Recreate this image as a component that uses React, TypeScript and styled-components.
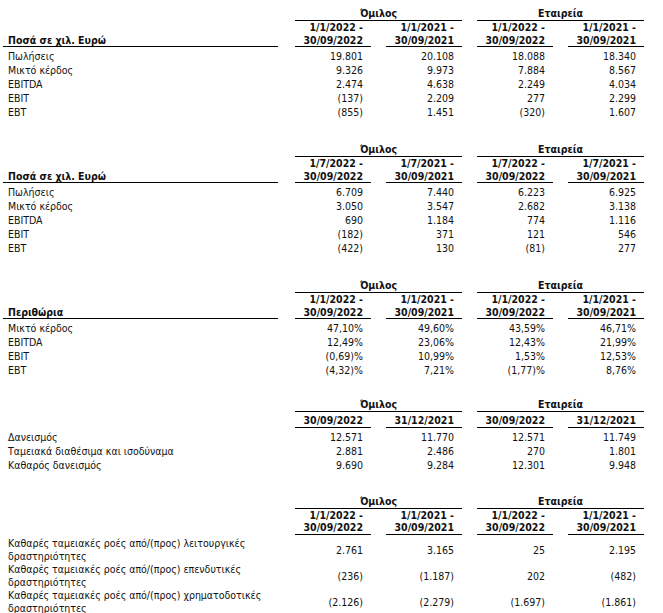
import React from 'react';
import styled, { createGlobalStyle } from 'styled-components';

const GlobalStyle = createGlobalStyle`
  html, body { margin: 0; padding: 0; background: #fff; }
  body {
    font-family: "DejaVu Sans Condensed", "DejaVu Sans", sans-serif;
    font-stretch: condensed;
    font-size: 10.5px;
    color: #111;
  }
`;

const Page = styled.div`
  padding: 7px 0 0 3px;
  display: flex;
  flex-direction: column;
`;

const Table = styled.div<{ $gap: number }>`
  display: grid;
  grid-template-columns: 277px repeat(4, 76px);
  column-gap: 15px;
  margin-top: ${(p) => p.$gap}px;
`;

const Blank = styled.div``;

const GroupHead = styled.div`
  grid-column: span 2;
  text-align: center;
  font-weight: bold;
  line-height: 13px;
  border-bottom: 1.5px solid #000;
`;

const LabelHead = styled.div<{ $line: boolean }>`
  margin-right: 2px;
  padding-left: 5px;
  font-weight: bold;
  display: flex;
  align-items: flex-end;
  line-height: 12.5px;
  border-bottom: 1.5px solid ${(p) => (p.$line ? '#000' : 'transparent')};
`;

const DateHead = styled.div<{ $single: boolean }>`
  font-weight: bold;
  text-align: right;
  padding-right: 8px;
  line-height: 12.5px;
  padding-top: ${(p) => (p.$single ? '2px' : '0')};
  border-bottom: 1.5px solid #000;
  white-space: nowrap;
`;

const Label = styled.div<{ $first: boolean; $tall: boolean }>`
  padding-left: 5px;
  line-height: ${(p) => (p.$tall ? '13px' : '14px')};
  padding-top: ${(p) => (p.$first ? '2px' : '0')};
  white-space: nowrap;
`;

const Value = styled.div<{ $first: boolean }>`
  display: flex;
  align-items: center;
  justify-content: flex-end;
  padding-right: 8px;
  line-height: 14px;
  padding-top: ${(p) => (p.$first ? '2px' : '0')};
  white-space: nowrap;
`;

type Row = { label: string[]; values: string[] };
type TableData = {
  gap: number;
  title?: string;
  dates: string[][];
  rows: Row[];
};

const p9m = [
  ['1/1/2022 -', '30/09/2022'],
  ['1/1/2021 -', '30/09/2021'],
  ['1/1/2022 -', '30/09/2022'],
  ['1/1/2021 -', '30/09/2021'],
];
const q3 = [
  ['1/7/2022 -', '30/09/2022'],
  ['1/7/2021 -', '30/09/2021'],
  ['1/7/2022 -', '30/09/2022'],
  ['1/7/2021 -', '30/09/2021'],
];

const tables: TableData[] = [
  {
    gap: 0,
    title: 'Ποσά σε χιλ. Ευρώ',
    dates: p9m,
    rows: [
      { label: ['Πωλήσεις'], values: ['19.801', '20.108', '18.088', '18.340'] },
      { label: ['Μικτό κέρδος'], values: ['9.326', '9.973', '7.884', '8.567'] },
      { label: ['EBITDA'], values: ['2.474', '4.638', '2.249', '4.034'] },
      { label: ['EBIT'], values: ['(137)', '2.209', '277', '2.299'] },
      { label: ['EBT'], values: ['(855)', '1.451', '(320)', '1.607'] },
    ],
  },
  {
    gap: 24,
    title: 'Ποσά σε χιλ. Ευρώ',
    dates: q3,
    rows: [
      { label: ['Πωλήσεις'], values: ['6.709', '7.440', '6.223', '6.925'] },
      { label: ['Μικτό κέρδος'], values: ['3.050', '3.547', '2.682', '3.138'] },
      { label: ['EBITDA'], values: ['690', '1.184', '774', '1.116'] },
      { label: ['EBIT'], values: ['(182)', '371', '121', '546'] },
      { label: ['EBT'], values: ['(422)', '130', '(81)', '277'] },
    ],
  },
  {
    gap: 24,
    title: 'Περιθώρια',
    dates: p9m,
    rows: [
      { label: ['Μικτό κέρδος'], values: ['47,10%', '49,60%', '43,59%', '46,71%'] },
      { label: ['EBITDA'], values: ['12,49%', '23,06%', '12,43%', '21,99%'] },
      { label: ['EBIT'], values: ['(0,69)%', '10,99%', '1,53%', '12,53%'] },
      { label: ['EBT'], values: ['(4,32)%', '7,21%', '(1,77)%', '8,76%'] },
    ],
  },
  {
    gap: 21,
    dates: [['30/09/2022'], ['31/12/2021'], ['30/09/2022'], ['31/12/2021']],
    rows: [
      { label: ['Δανεισμός'], values: ['12.571', '11.770', '12.571', '11.749'] },
      { label: ['Ταμειακά διαθέσιμα και ισοδύναμα'], values: ['2.881', '2.486', '270', '1.801'] },
      { label: ['Καθαρός δανεισμός'], values: ['9.690', '9.284', '12.301', '9.948'] },
    ],
  },
  {
    gap: 23,
    dates: p9m,
    rows: [
      {
        label: ['Καθαρές ταμειακές ροές από/(προς) λειτουργικές', 'δραστηριότητες'],
        values: ['2.761', '3.165', '25', '2.195'],
      },
      {
        label: ['Καθαρές ταμειακές ροές από/(προς) επενδυτικές', 'δραστηριότητες'],
        values: ['(236)', '(1.187)', '202', '(482)'],
      },
      {
        label: ['Καθαρές ταμειακές ροές από/(προς) χρηματοδοτικές', 'δραστηριότητες'],
        values: ['(2.126)', '(2.279)', '(1.697)', '(1.861)'],
      },
    ],
  },
];

function FinTable({ data }: { data: TableData }) {
  return (
    <Table $gap={data.gap}>
      <Blank />
      <GroupHead>Όμιλος</GroupHead>
      <GroupHead>Εταιρεία</GroupHead>
      <LabelHead $line={!!data.title}>{data.title ?? ''}</LabelHead>
      {data.dates.map((d, i) => (
        <DateHead key={i} $single={d.length === 1}>
          {d.map((line, j) => (
            <div key={j}>{line}</div>
          ))}
        </DateHead>
      ))}
      {data.rows.map((r, ri) => (
        <React.Fragment key={ri}>
          <Label $first={ri === 0} $tall={r.label.length > 1}>
            {r.label.map((l, li) => (
              <div key={li}>{l}</div>
            ))}
          </Label>
          {r.values.map((v, vi) => (
            <Value key={vi} $first={ri === 0}>
              {v}
            </Value>
          ))}
        </React.Fragment>
      ))}
    </Table>
  );
}

export default function App() {
  return (
    <>
      <GlobalStyle />
      <Page>
        {tables.map((t, i) => (
          <FinTable key={i} data={t} />
        ))}
      </Page>
    </>
  );
}
